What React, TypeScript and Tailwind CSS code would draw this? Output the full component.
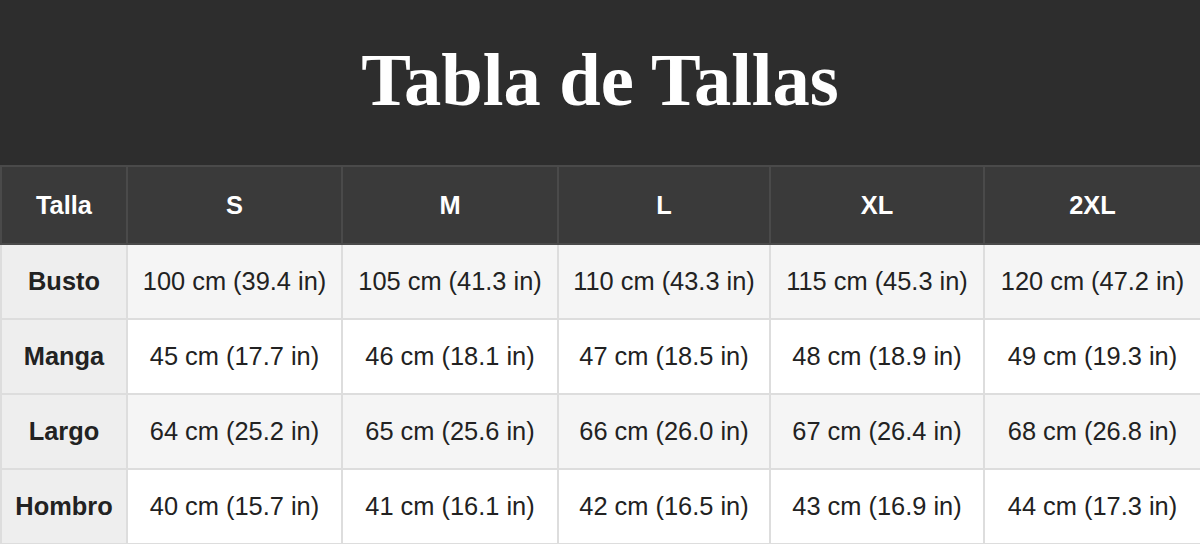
const sizes = ["S", "M", "L", "XL", "2XL"];

const colWidths = ["w-[126px]", "w-[215px]", "w-[216px]", "w-[212px]", "w-[214px]", "w-[217px]"];

const rows: { label: string; values: string[] }[] = [
  {
    label: "Busto",
    values: ["100 cm (39.4 in)", "105 cm (41.3 in)", "110 cm (43.3 in)", "115 cm (45.3 in)", "120 cm (47.2 in)"],
  },
  {
    label: "Manga",
    values: ["45 cm (17.7 in)", "46 cm (18.1 in)", "47 cm (18.5 in)", "48 cm (18.9 in)", "49 cm (19.3 in)"],
  },
  {
    label: "Largo",
    values: ["64 cm (25.2 in)", "65 cm (25.6 in)", "66 cm (26.0 in)", "67 cm (26.4 in)", "68 cm (26.8 in)"],
  },
  {
    label: "Hombro",
    values: ["40 cm (15.7 in)", "41 cm (16.1 in)", "42 cm (16.5 in)", "43 cm (16.9 in)", "44 cm (17.3 in)"],
  },
];

export default function App() {
  return (
    <div className="w-[1200px] h-[544px] overflow-hidden bg-white font-['Liberation_Sans',Arial,sans-serif]">
      {/* Title */}
      <div className="bg-[#2d2d2d] h-[165px] pt-[43px]">
        <h1 className="text-center text-white font-bold text-[74.5px] leading-[74px] font-['Liberation_Serif','Times_New_Roman',serif]">
          Tabla de Tallas
        </h1>
      </div>

      {/* Size table */}
      <table className="w-full table-fixed border-collapse text-[25.4px]">
        <colgroup>
          {colWidths.map((w, i) => (
            <col key={i} className={w} />
          ))}
        </colgroup>
        <thead>
          <tr className="h-[78px] bg-[#3a3a3a] text-white">
            <th className="border-2 border-[#4a4a4a] font-bold text-center align-middle">Talla</th>
            {sizes.map((s) => (
              <th key={s} className="border-2 border-[#4a4a4a] font-bold text-center align-middle">
                {s}
              </th>
            ))}
          </tr>
        </thead>
        <tbody className="text-[#222]">
          {rows.map((row, i) => (
            <tr key={row.label} className={`h-[75px] ${i % 2 === 0 ? "bg-[#f5f5f5]" : "bg-white"}`}>
              <td className="border-2 border-[#dddddd] bg-[#eeeeee] font-bold text-center align-middle">
                {row.label}
              </td>
              {row.values.map((v) => (
                <td key={v} className="border-2 border-[#dddddd] text-center align-middle whitespace-nowrap">
                  {v}
                </td>
              ))}
            </tr>
          ))}
        </tbody>
      </table>
    </div>
  );
}
